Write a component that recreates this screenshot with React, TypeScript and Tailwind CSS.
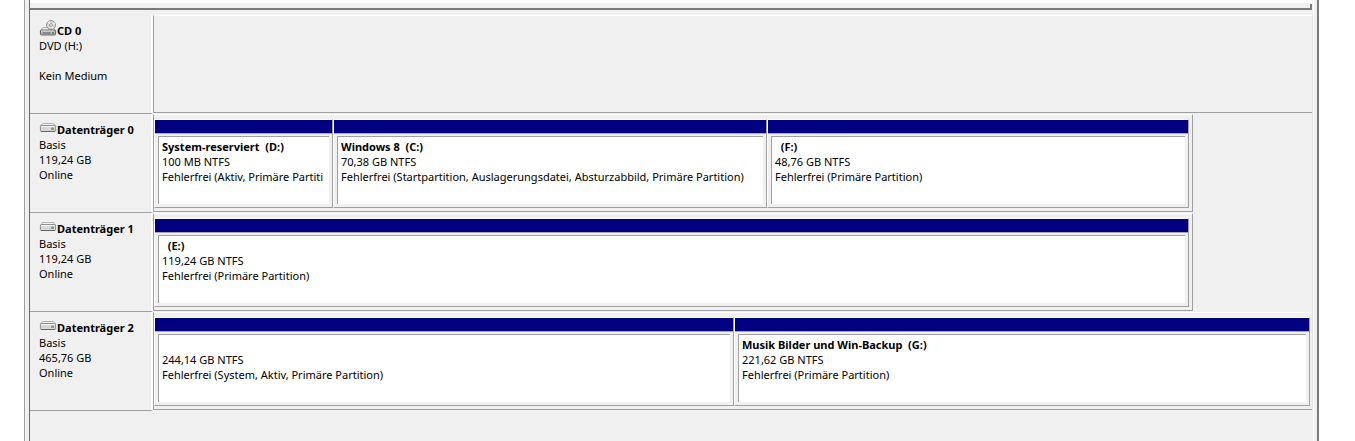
import clsx from 'clsx';

interface Partition {
  name: string;
  size: string;
  status: string;
  grow: string;
}

interface Disk {
  title: string;
  lines: string[];
  partitions: Partition[];
  panelGrow: string;
  restGrow?: string;
}

const disks: Disk[] = [
  {
    title: 'Datenträger 0',
    lines: ['Basis', '119,24 GB', 'Online'],
    panelGrow: 'grow-[1035]',
    restGrow: 'grow-[119]',
    partitions: [
      {
        name: 'System-reserviert  (D:)',
        size: '100 MB NTFS',
        status: 'Fehlerfrei (Aktiv, Primäre Partiti',
        grow: 'grow-[177]',
      },
      {
        name: 'Windows 8  (C:)',
        size: '70,38 GB NTFS',
        status: 'Fehlerfrei (Startpartition, Auslagerungsdatei, Absturzabbild, Primäre Partition)',
        grow: 'grow-[432]',
      },
      {
        name: '  (F:)',
        size: '48,76 GB NTFS',
        status: 'Fehlerfrei (Primäre Partition)',
        grow: 'grow-[420]',
      },
    ],
  },
  {
    title: 'Datenträger 1',
    lines: ['Basis', '119,24 GB', 'Online'],
    panelGrow: 'grow-[1035]',
    restGrow: 'grow-[119]',
    partitions: [
      {
        name: '  (E:)',
        size: '119,24 GB NTFS',
        status: 'Fehlerfrei (Primäre Partition)',
        grow: 'grow',
      },
    ],
  },
  {
    title: 'Datenträger 2',
    lines: ['Basis', '465,76 GB', 'Online'],
    panelGrow: 'grow',
    partitions: [
      {
        name: ' ',
        size: '244,14 GB NTFS',
        status: 'Fehlerfrei (System, Aktiv, Primäre Partition)',
        grow: 'grow-[578]',
      },
      {
        name: 'Musik Bilder und Win-Backup  (G:)',
        size: '221,62 GB NTFS',
        status: 'Fehlerfrei (Primäre Partition)',
        grow: 'grow-[574]',
      },
    ],
  },
];

function DiskIcon() {
  return (
    <svg width="18" height="18" viewBox="0 0 18 18" className="shrink-0 self-end" aria-hidden="true">
      <path d="M3.5 4.5h11l1.8 2.5H1.6z" fill="#f4f4f4" stroke="#a0a0a0" strokeWidth="0.8" />
      <rect x="1.4" y="6.5" width="15.2" height="6" rx="1" fill="#d6d8d6" stroke="#858585" strokeWidth="0.9" />
      <path d="M2.4 7.5h13" stroke="#fafafa" strokeWidth="1" />
      <path d="M2 12.5h14" stroke="#666" strokeWidth="1" />
      <rect x="12" y="8.5" width="3" height="2.5" fill="#6fae78" />
    </svg>
  );
}

function DiscDriveIcon() {
  return (
    <svg width="18" height="18" viewBox="0 0 18 18" className="shrink-0 self-end" aria-hidden="true">
      <path d="M3.4 7.6h11.2l1.9 3.6H1.4z" fill="#efefef" stroke="#a5a5a5" strokeWidth="0.8" />
      <circle cx="12" cy="5" r="4.5" fill="#d4d6d4" stroke="#8c8e8c" strokeWidth="0.9" />
      <path d="M12 5L9.4 1.8M12 5l3.8-1.6M12 5l1.6 3.6" stroke="#f8f8f8" strokeWidth="1.2" />
      <circle cx="12" cy="5" r="1.4" fill="#fff" stroke="#7c7c7c" strokeWidth="0.8" />
      <rect x="1.4" y="10" width="15.2" height="5" rx="1" fill="#b0b2b0" stroke="#606060" strokeWidth="0.9" />
      <path d="M2.4 11h13" stroke="#e8e8e8" strokeWidth="0.8" />
      <path d="M3.5 13h8" stroke="#5a5a5a" strokeWidth="0.9" />
      <rect x="13" y="12" width="2" height="2" fill="#5c9a62" />
    </svg>
  );
}

function DiskLabel({ title, lines, disc }: { title: string; lines: string[]; disc?: boolean }) {
  return (
    <div className="w-[123px] shrink-0 border-r-2 border-b border-r-white border-b-[#a0a0a0] pt-2 pl-[9px]">
      <div className="flex h-[15px] font-bold">
        {disc ? <DiscDriveIcon /> : <DiskIcon />}
        <span>{title}</span>
      </div>
      {lines.map((line, i) => (
        <div key={i} className="whitespace-pre">{line}</div>
      ))}
    </div>
  );
}

function PartitionBox({ partition }: { partition: Partition }) {
  return (
    <div
      className={clsx(
        'flex min-w-0 basis-0 flex-col border border-t-white border-r-[#a0a0a0] border-b-[#a0a0a0] border-l-white',
        partition.grow
      )}
    >
      <div className="h-[14px] border-b border-b-[#a6a6c4] bg-[#000080]" />
      <div className="mx-[3px] mt-[2px] mb-[3px] grow overflow-hidden border-t border-l border-[#a0a0a0] bg-white pt-[2px] pr-[2px] pl-[3px]">
        <div className="overflow-hidden whitespace-pre">
          <div className="font-bold">{partition.name}</div>
          <div>{partition.size}</div>
          <div>{partition.status}</div>
        </div>
      </div>
    </div>
  );
}

export default function App() {
  return (
    <div className="min-h-screen bg-white pr-9 pl-6 font-['Noto_Sans',sans-serif] text-[11px] leading-[15px] text-black">
      <div className="flex min-h-screen border-r-2 border-l border-r-[#7a7a7a] border-l-[#a0a0a0] bg-[#f0f0f0] pr-[3px] pl-1">
        <div className="min-w-0 grow border-r border-l border-r-white border-l-[#696969]">
          {/* bottom edge of the volume list */}
          <div className="mr-px h-[10px] border-b-2 border-b-[#7a7a7a]">
            <div className="h-[3px] bg-white" />
            <div className="mt-px h-1 border-r-2 border-r-[#7a7a7a]" />
          </div>

          <div className="mt-[5px] border-r border-r-[#e3e3e3]">
            <div className="flex h-[99px]">
              <DiskLabel title="CD 0" lines={['DVD (H:)', ' ', 'Kein Medium']} disc />
              <div className="mb-px grow border-t border-b border-l border-t-white border-b-[#a0a0a0] border-l-[#a0a0a0]" />
            </div>

            {disks.map((disk) => (
              <div key={disk.title} className="flex h-[99px]">
                <DiskLabel title={disk.title} lines={disk.lines} />
                <div
                  className={clsx(
                    'mb-px flex min-w-0 basis-0 border-t border-b border-l border-t-white border-b-[#a0a0a0] border-l-[#a0a0a0] pt-1 pb-[3px]',
                    disk.restGrow ? 'border-r border-r-[#a0a0a0] pr-[3px]' : 'pr-[2px]',
                    disk.panelGrow
                  )}
                >
                  {disk.partitions.map((partition, i) => (
                    <PartitionBox key={i} partition={partition} />
                  ))}
                </div>
                {disk.restGrow && <div className={clsx('basis-0', disk.restGrow)} />}
              </div>
            ))}
          </div>
        </div>
      </div>
    </div>
  );
}
